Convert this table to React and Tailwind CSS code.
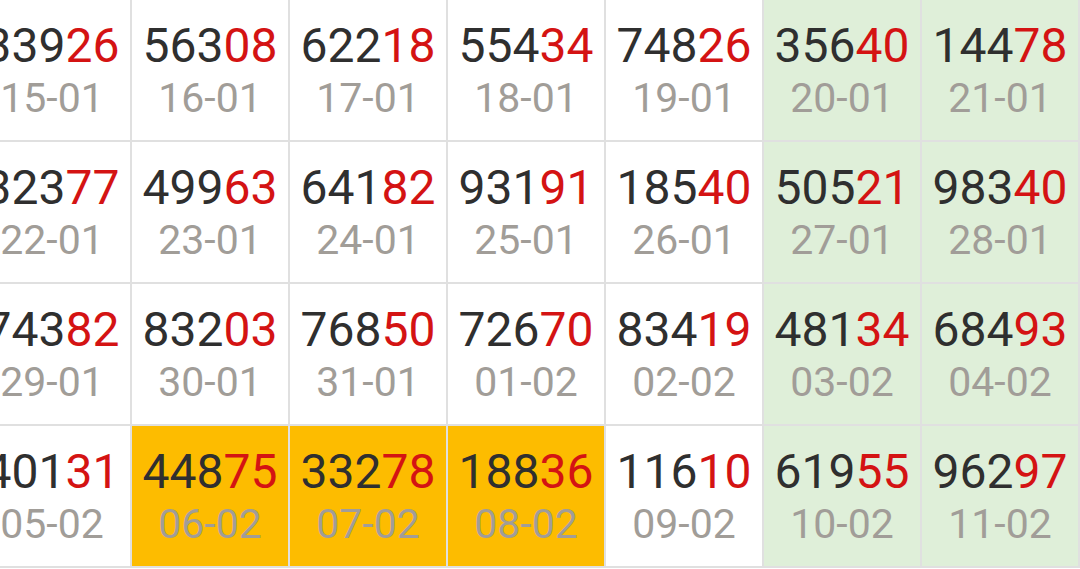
const rows = [
  [
    ['339', '26', '15-01'],
    ['563', '08', '16-01'],
    ['622', '18', '17-01'],
    ['554', '34', '18-01'],
    ['748', '26', '19-01'],
    ['356', '40', '20-01'],
    ['144', '78', '21-01'],
  ],
  [
    ['323', '77', '22-01'],
    ['499', '63', '23-01'],
    ['641', '82', '24-01'],
    ['931', '91', '25-01'],
    ['185', '40', '26-01'],
    ['505', '21', '27-01'],
    ['983', '40', '28-01'],
  ],
  [
    ['743', '82', '29-01'],
    ['832', '03', '30-01'],
    ['768', '50', '31-01'],
    ['726', '70', '01-02'],
    ['834', '19', '02-02'],
    ['481', '34', '03-02'],
    ['684', '93', '04-02'],
  ],
  [
    ['401', '31', '05-02'],
    ['448', '75', '06-02'],
    ['332', '78', '07-02'],
    ['188', '36', '08-02'],
    ['116', '10', '09-02'],
    ['619', '55', '10-02'],
    ['962', '97', '11-02'],
  ],
];

const highlighted = ['06-02', '07-02', '08-02'];

const Cell = ({ head, tail, date, col }) => {
  let bg = 'bg-white';
  if (col >= 5) bg = 'bg-[#dfefd9]';
  if (highlighted.includes(date)) bg = 'bg-[#fdbc00]';

  return (
    <div className={`${bg} flex flex-col items-center justify-center gap-[8px] pt-[1px]`}>
      <div className="text-[48px] leading-none text-[#2f2f2f] whitespace-nowrap">
        {head}
        <span className="text-[#d41313]">{tail}</span>
      </div>
      <div className="text-[41px] leading-none text-[#a19d98] whitespace-nowrap">{date}</div>
    </div>
  );
};

export default function App() {
  return (
    <div
      className="w-[1080px] h-[569px] overflow-hidden bg-white"
      style={{ fontFamily: 'Roboto, "Noto Sans", sans-serif' }}
    >
      <div className="ml-[-26px] w-[1106px] grid grid-cols-[repeat(7,156px)] grid-rows-[repeat(4,140px)] gap-[2px] pr-[2px] pb-[2px] bg-[#e0e0e0]">
        {rows.map((row, r) =>
          row.map(([head, tail, date], c) => (
            <Cell key={`${r}-${c}`} head={head} tail={tail} date={date} col={c} />
          ))
        )}
      </div>
    </div>
  );
}
